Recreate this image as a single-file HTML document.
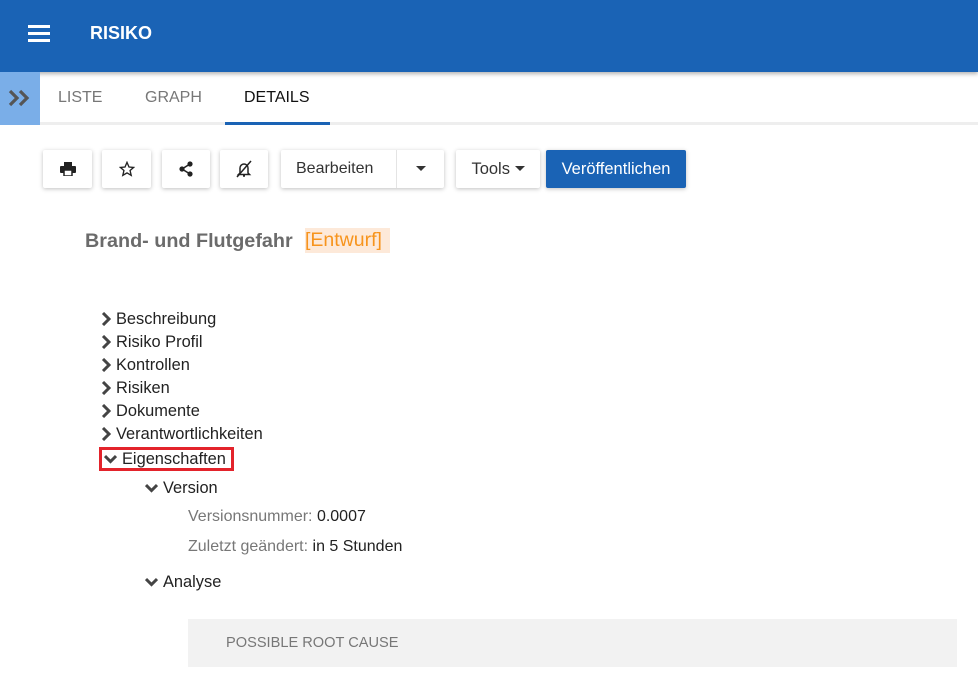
<!DOCTYPE html>
<html><head><meta charset="utf-8"><style>
*{margin:0;padding:0;box-sizing:border-box}
body{width:978px;height:700px;overflow:hidden;background:#fff;font-family:"Liberation Sans",sans-serif;position:relative;color:#222}
.abs{position:absolute}
.hdr{left:0;top:0;width:978px;height:72px;background:#1a63b5;box-shadow:0 2px 4px rgba(0,0,0,.3)}
.btn{position:absolute;top:150px;height:38px;background:#fff;box-shadow:0 1px 4px rgba(0,0,0,.25);border-radius:2px;display:flex;align-items:center;justify-content:center;font-size:16px;color:#333}
.li{position:absolute;left:101px;font-size:16.4px;height:20px;line-height:20px;display:flex;align-items:center}
.li svg{margin-right:5px}
</style></head><body>
<div class="abs hdr"></div>
<div class="abs" style="left:28px;top:25px;width:22px;height:3px;background:#fff;box-shadow:0 7px 0 #fff,0 14px 0 #fff"></div>
<div class="abs" style="left:90px;top:22px;color:#fff;font-weight:bold;font-size:18px;line-height:22px">RISIKO</div>
<div class="abs" style="left:0;top:72px;width:40px;height:53px;background:#7aaee8"></div>
<svg class="abs" style="left:8px;top:89px" width="24" height="18" viewBox="0 0 24 18"><path d="M2 2l7 7-7 7M12 2l7 7-7 7" fill="none" stroke="#555" stroke-width="3.2"/></svg>
<div class="abs" style="left:40px;top:122px;width:938px;height:3px;background:#eee"></div>
<div class="abs" style="left:225px;top:122px;width:105px;height:3px;background:#1a63b5"></div>
<div class="abs" style="left:58px;top:89px;font-size:16px;color:#777">LISTE</div>
<div class="abs" style="left:145px;top:89px;font-size:16px;color:#777">GRAPH</div>
<div class="abs" style="left:244px;top:89px;font-size:16px;color:#111">DETAILS</div>

<div class="btn" style="left:43px;width:49px"><svg width="16" height="14" viewBox="0 0 16 14"><rect x="4" y="0" width="8" height="4" fill="#222"/><rect x="0" y="4" width="16" height="7" rx="1" fill="#222"/><rect x="4" y="8" width="8" height="6" fill="#fff" stroke="#222" stroke-width="1.5"/></svg></div>
<div class="btn" style="left:102px;width:49px"><svg width="16" height="16" viewBox="0 0 24 24"><path d="M12 2l3 7 7 .6-5.4 4.7 1.7 7.2L12 17.8 5.7 21.5l1.7-7.2L2 9.6 9 9z" fill="none" stroke="#222" stroke-width="2"/></svg></div>
<div class="btn" style="left:162px;width:48px"><svg width="16" height="16" viewBox="0 0 16 16"><circle cx="12" cy="3" r="2.6" fill="#222"/><circle cx="4" cy="8" r="2.6" fill="#222"/><circle cx="12" cy="13" r="2.6" fill="#222"/><path d="M4 8l8-5M4 8l8 5" stroke="#222" stroke-width="1.6"/></svg></div>
<div class="btn" style="left:220px;width:48px"><svg width="18" height="18" viewBox="0 0 18 18"><path d="M5 13V8a4 4 0 0 1 8 0v5l1.5 1.5h-11z M8 16h2" fill="none" stroke="#222" stroke-width="1.5"/><path d="M2 17L16 1" stroke="#222" stroke-width="1.5"/></svg></div>
<div class="btn" style="left:281px;width:163px;justify-content:flex-start"><span style="padding-left:15px;width:115px">Bearbeiten</span><span style="width:1px;height:38px;background:#e4e4e4"></span><span style="flex:1;display:flex;justify-content:center"><svg width="10" height="6"><path d="M0 0h10L5 5z" fill="#333"/></svg></span></div>
<div class="btn" style="left:456px;width:84px;font-size:16.5px">Tools&nbsp;<svg width="10" height="6"><path d="M0 0h10L5 5z" fill="#333"/></svg></div>
<div class="btn" style="left:546px;width:140px;background:#1a63b5;color:#fff;font-size:16.5px">Veröffentlichen</div>

<div class="abs" style="left:85px;top:229px;font-size:19.8px;font-weight:bold;color:#6b6b6b;line-height:24px">Brand- und Flutgefahr</div>
<div class="abs" style="left:305px;top:228px;width:85px;height:25px;background:#fde9d9;color:#f7941d;font-size:19.5px;line-height:25px;white-space:nowrap">[Entwurf]</div>

<div class="li" style="top:309px"><svg width="10" height="14" viewBox="0 0 10 14"><path d="M2 1l6 6-6 6" fill="none" stroke="#444" stroke-width="3"/></svg>Beschreibung</div>
<div class="li" style="top:332px"><svg width="10" height="14" viewBox="0 0 10 14"><path d="M2 1l6 6-6 6" fill="none" stroke="#444" stroke-width="3"/></svg>Risiko Profil</div>
<div class="li" style="top:355px"><svg width="10" height="14" viewBox="0 0 10 14"><path d="M2 1l6 6-6 6" fill="none" stroke="#444" stroke-width="3"/></svg>Kontrollen</div>
<div class="li" style="top:378px"><svg width="10" height="14" viewBox="0 0 10 14"><path d="M2 1l6 6-6 6" fill="none" stroke="#444" stroke-width="3"/></svg>Risiken</div>
<div class="li" style="top:401px"><svg width="10" height="14" viewBox="0 0 10 14"><path d="M2 1l6 6-6 6" fill="none" stroke="#444" stroke-width="3"/></svg>Dokumente</div>
<div class="li" style="top:424px"><svg width="10" height="14" viewBox="0 0 10 14"><path d="M2 1l6 6-6 6" fill="none" stroke="#444" stroke-width="3"/></svg>Verantwortlichkeiten</div>
<div class="abs" style="left:99px;top:447px;width:135px;height:24px;border:3px solid #e3232b"></div>
<div class="li" style="top:449px;left:104px"><svg width="13" height="10" viewBox="0 0 13 10"><path d="M1 2l5.5 5.5L12 2" fill="none" stroke="#444" stroke-width="3"/></svg>Eigenschaften</div>
<div class="li" style="top:478px;left:145px"><svg width="13" height="10" viewBox="0 0 13 10"><path d="M1 2l5.5 5.5L12 2" fill="none" stroke="#444" stroke-width="3"/></svg>Version</div>
<div class="abs" style="left:188px;top:508px;font-size:16px;color:#777">Versionsnummer: <span style="color:#222">0.0007</span></div>
<div class="abs" style="left:188px;top:538px;font-size:16px;color:#777">Zuletzt geändert: <span style="color:#222">in 5 Stunden</span></div>
<div class="li" style="top:572px;left:145px"><svg width="13" height="10" viewBox="0 0 13 10"><path d="M1 2l5.5 5.5L12 2" fill="none" stroke="#444" stroke-width="3"/></svg>Analyse</div>
<div class="abs" style="left:188px;top:619px;width:769px;height:48px;background:#f2f2f2;font-size:14.6px;color:#777;line-height:48px;padding-left:38px">POSSIBLE ROOT CAUSE</div>
</body></html>
